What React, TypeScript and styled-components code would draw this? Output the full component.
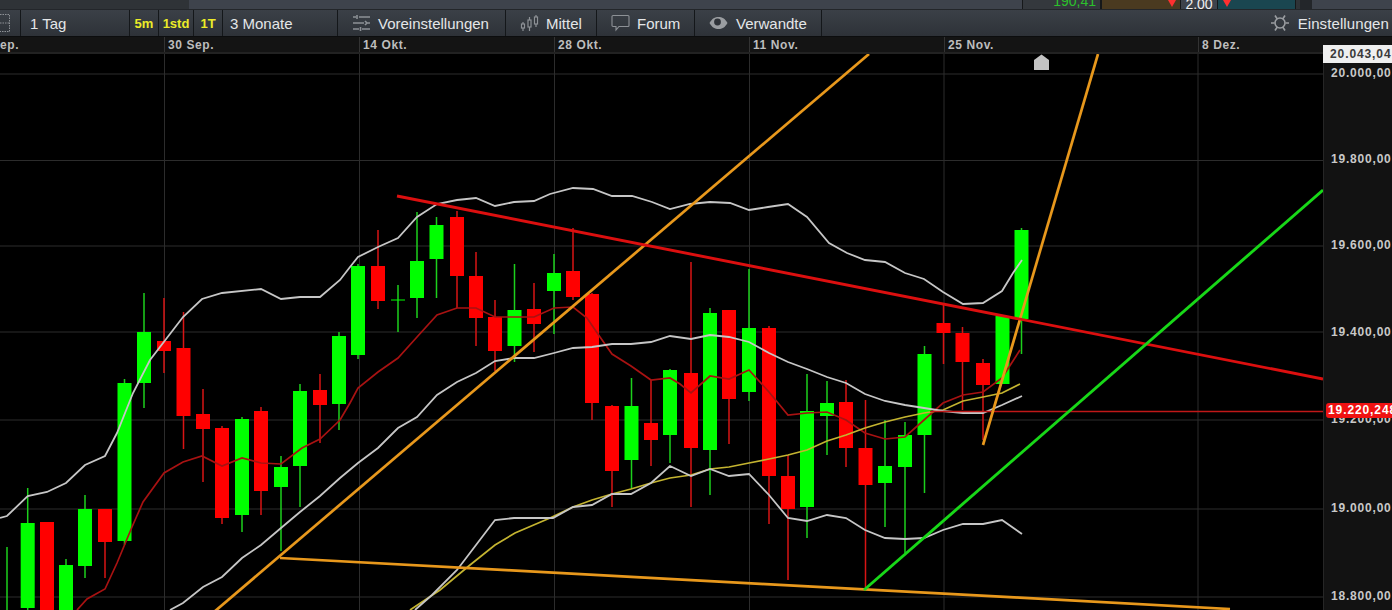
import React from 'react';
import styled, { createGlobalStyle } from 'styled-components';

type Candle = [number, number, number, number, number, 0 | 1];

// x, high, body top, body bottom, low, up
const candles: Candle[] = [
  [7, 547, 612, 620, 620, 1], [27.7, 488, 523, 608, 612, 1], [47, 522, 522, 620, 620, 0], [66, 559, 565, 620, 620, 1],
  [85, 495, 509, 566, 578, 1], [105, 509, 509, 542, 578, 0], [124.5, 379, 383, 541, 545, 1], [144, 293, 332, 383, 408, 1],
  [164, 298, 341, 351, 373, 0], [183.5, 312, 348, 416, 449, 0], [203, 389, 414, 429, 482, 0], [222, 426, 428, 518, 524, 0],
  [242, 417, 419, 515, 532, 1], [261, 407, 411, 491, 515, 0], [281, 456, 467, 487, 551, 1], [300, 384, 391, 466, 507, 1],
  [320, 374, 390, 405, 443, 0], [339, 332, 336, 404, 430, 1], [358, 264, 266, 355, 359, 1], [378, 230, 266, 301, 309, 0],
  [398, 285, 299.5, 300.5, 332, 1], [417, 212, 261, 298, 318, 1], [436.5, 217, 225, 259, 298, 1], [457, 211, 217, 276, 308, 0],
  [476, 252, 276, 318, 346, 0], [495, 300, 317, 351, 371, 0], [514.5, 264, 310, 346, 362, 1], [534, 283, 309, 324, 352, 0],
  [554, 254, 273, 291, 334, 1], [573, 228, 271, 297, 300, 0], [592, 293, 294, 403, 420, 0], [612, 405, 406, 471, 507, 0],
  [631.5, 378, 406, 460, 489, 1], [651, 380, 423, 440, 466, 0], [670, 369, 370, 435, 463, 1], [691, 262, 373, 448, 507, 0],
  [710, 308, 313, 450, 495, 1], [729, 310, 310, 399, 444, 0], [749, 269, 328, 392, 401, 1], [769, 326, 328, 476, 524, 0],
  [788, 455, 476, 509, 580, 0], [807, 374, 411, 507, 538, 1], [827, 381, 403, 416, 455, 1], [846, 380, 402, 448, 467, 0],
  [865.5, 400, 448, 485, 590, 0], [885, 420, 466, 483, 527, 1], [905, 422, 435, 467, 553, 1], [924.5, 346, 354, 435, 493, 1],
  [943.5, 303, 323, 333, 364, 0], [962.5, 327, 333, 362, 410, 0], [983, 359, 363, 385, 440, 0], [1002.5, 315, 316, 384, 384, 1],
  [1021.5, 228, 230, 319, 354, 1],
];

const upperBand = '0,518 7,516 27.7,496 47,492 66,483 85,465 105,456 117,433 133,393 150,360 183,317 202,299 222,293 261,289 281,299 300,297 320,297 340,280 350,267 358,257 378,247 398,238 417,217 437,204 457,200 476,198 495,206 514,202 534,201 550,194 573,188 593,189 612,196 632,196 652,202 670,209 690,204 710,202 730,203 749,210 768,207 788,204 807,217 829,243 847,253 865,260 885,262 905,273 924,279 943,292 963,304 983,303 1002,291 1013,273 1022,260';
const middleBand = '170,610 183,603 203,587 222,577 242,558 261,545 281,528 300,512 320,496 340,478 358,463 378,448 398,428 417,417 437,395 457,382 476,373 495,361 514,358 534,358 554,353 573,348 592,347 612,344 631,344 651,342 670,336 691,339 710,335 729,337 749,342 769,353 788,362 807,369 827,377 846,383 865,394 885,401 905,405 924,408 943,411 963,413 983,413 1002,405 1022,396';
const lowerBand = '415,610 432,595 457,570 476,545 495,520 514,518 553,518 573,507 592,505 612,494 631,494 651,483 670,466 691,476 710,469 729,476 749,474 769,495 788,518 807,521 827,515 846,518 865,530 885,538 905,539 924,538 943,530 963,524 983,524 1002,520 1022,534';
const yellowAvg = '410,610 440,590 470,565 495,545 515,533 550,518 573,507 592,500 612,494 631,489 651,483 670,478 691,475 710,469 729,467 749,463 769,459 788,455 807,450 827,441 846,435 865,428 885,422 905,417 924,413 943,410 963,401 983,397 1002,393 1020,384';
const redAvg = '77,610 87,599 105,589 117,563 132,527 143,502 164,473 183,462 202,456 222,466 242,458 261,463 281,464 302,448 320,439 340,420 350,403 358,388 378,372 398,358 417,337 437,315 457,308 476,308 495,317 534,317 554,308 573,307 587,318 600,337 612,354 631,366 651,380 670,378 680,384 691,393 710,376 729,379 749,370 769,392 788,415 807,413 827,412 846,420 865,433 885,439 905,437 924,420 943,403 963,395 983,392 1002,378 1020,350';

const gridY = [74, 160.5, 246, 332, 420, 509, 597];
const gridX = [164.5, 359.5, 554.5, 749.5, 944, 1198];

const dates: [string, number][] = [['ep.', 164], ['30 Sep.', 195], ['14 Okt.', 195], ['28 Okt.', 195], ['11 Nov.', 195], ['25 Nov.', 254], ['8 Dez.', 194]];
const prices: [string, number][] = [['20.000,00', 86], ['19.800,00', 86], ['19.600,00', 87], ['19.400,00', 87], ['19.200,00', 89], ['19.000,00', 88], ['18.800,00', 20]];

const GlobalStyle = createGlobalStyle`
  html, body {
    margin: 0;
    background: #000;
    overflow: hidden;
  }
`;

const Page = styled.div`
  position: relative;
  width: 1392px;
  height: 610px;
  display: flex;
  flex-direction: column;
  overflow: hidden;
  background: #000;
  font-family: 'Liberation Sans', Arial, sans-serif;
`;

const TopStrip = styled.div`
  height: 9px;
  display: flex;
  overflow: hidden;
  background: #3e434c;
`;

const StripPart = styled.div<{ $w: number; $bg: string; $border?: boolean; $end?: boolean }>`
  position: relative;
  width: ${p => p.$w}px;
  flex: none;
  box-sizing: border-box;
  padding-right: ${p => (p.$end ? 4 : 0)}px;
  background: ${p => p.$bg};
  border-right: ${p => (p.$border ? '1px solid #16181a' : 'none')};
  border-left: ${p => (p.$border ? '1px solid #16181a' : 'none')};
  display: flex;
  justify-content: ${p => (p.$end ? 'flex-end' : 'center')};
`;

const StripValue = styled.span<{ $color: string; $shift: number }>`
  font-size: 14px;
  line-height: 14px;
  margin-top: ${p => p.$shift}px;
  color: ${p => p.$color};
`;

const DownMark = styled.i<{ $left: number }>`
  position: absolute;
  top: 0;
  left: ${p => p.$left}px;
  border-left: 4px solid transparent;
  border-right: 4px solid transparent;
  border-top: 7px solid #ff3030;
`;

const Toolbar = styled.div`
  height: 28px;
  flex: none;
  display: flex;
  align-items: stretch;
  box-sizing: border-box;
  border-top: 1px solid #23262a;
  border-bottom: 1px solid #0c0d0e;
  background: linear-gradient(#3b4047, #2e3238);
  color: #e4e6e8;
  font-size: 15px;
`;

const ToolButton = styled.div<{ $w: number; $gap?: number; $pad?: number }>`
  width: ${p => p.$w}px;
  flex: none;
  box-sizing: border-box;
  display: flex;
  align-items: center;
  gap: ${p => p.$gap ?? 8}px;
  padding-left: ${p => p.$pad ?? 9}px;
  border-right: 1px solid #14171a;
  overflow: hidden;
  white-space: nowrap;
`;

const RangeButton = styled(ToolButton)`
  justify-content: center;
  padding-left: 0;
  color: #ecec28;
  font-weight: bold;
  font-size: 13px;
`;

const ToolSpacer = styled.div`
  flex: 1;
`;

const SettingsButton = styled.div`
  display: flex;
  align-items: center;
  gap: 9px;
  padding-right: 3px;
  letter-spacing: 0.1px;
`;

const DateAxis = styled.div`
  height: 17px;
  flex: none;
  display: flex;
  box-sizing: border-box;
  background: #141414;
  border-bottom: 2px solid #222;
`;

const DateCell = styled.div<{ $w: number; $first?: boolean }>`
  width: ${p => p.$w}px;
  flex: none;
  box-sizing: border-box;
  padding-left: ${p => (p.$first ? 0 : 3)}px;
  border-left: ${p => (p.$first ? 'none' : '1px solid #333')};
  color: #bdbdbd;
  font-size: 12px;
  font-weight: bold;
  letter-spacing: 0.6px;
  line-height: 17px;
`;

const ChartRow = styled.div`
  flex: 1;
  display: flex;
  min-height: 0;
`;

const ChartCanvas = styled.svg`
  width: 1323px;
  height: 556px;
  flex: none;
  display: block;
  background: #000;
  filter: blur(0.3px);
`;

const PriceAxis = styled.div`
  position: relative;
  flex: 1;
  display: flex;
  flex-direction: column;
  box-sizing: border-box;
  padding: 12px 0 0 7px;
  background: #121212;
  border-left: 1px solid #262626;
  overflow: hidden;
`;

const PriceLabel = styled.div<{ $h: number }>`
  height: ${p => p.$h}px;
  flex: none;
  color: #c8c8c8;
  font-size: 12px;
  font-weight: bold;
  letter-spacing: 0.8px;
  line-height: 15px;
  white-space: nowrap;
`;

const PriceBadge = styled.div<{ $top: number; $bg: string; $color: string; $pad: number }>`
  position: absolute;
  top: ${p => p.$top}px;
  right: 0;
  box-sizing: border-box;
  width: ${p => 69 - (p.$pad < 4 ? 3 : 0)}px;
  height: ${p => (p.$pad < 4 ? 15 : 18)}px;
  padding-left: ${p => p.$pad}px;
  background: ${p => p.$bg};
  border-radius: ${p => (p.$pad < 4 ? '3px 0 0 3px' : '0')};
  color: ${p => p.$color};
  font-size: 12px;
  font-weight: bold;
  letter-spacing: 0.9px;
  line-height: ${p => (p.$pad < 4 ? 15 : 18)}px;
  white-space: nowrap;
  overflow: hidden;
`;

const PresetsIcon = () => (
  <svg width="19" height="18" viewBox="0 0 19 18" fill="none" stroke="#8d9196" strokeWidth="1.6">
    <path d="M1 3h3M7 3h11M5 1v4M1 9h11M15 9h3M13 7l2 2-2 2M1 15h6M10 15h8M8.500 13v4" />
  </svg>
);

const CandleIcon = () => (
  <svg width="19" height="18" viewBox="0 0 19 18" fill="none" stroke="#8d9196" strokeWidth="1.2">
    <path d="M3 8v9M9.500 3v14M16 1v12" />
    <rect x="1.500" y="10" width="3" height="4" fill="#2f3339" />
    <rect x="8" y="6" width="3" height="7" fill="#2f3339" />
    <rect x="14.500" y="3" width="3" height="7" fill="#2f3339" />
  </svg>
);

const ForumIcon = () => (
  <svg width="19" height="18" viewBox="0 0 19 18" fill="none" stroke="#8d9196" strokeWidth="1.1">
    <path d="M2 1.500h15a1 1 0 0 1 1 1v9a1 1 0 0 1-1 1H8l-3 3.500v-3.500H2a1 1 0 0 1-1-1v-9a1 1 0 0 1 1-1z" />
  </svg>
);

const EyeIcon = () => (
  <svg width="19" height="14" viewBox="0 0 19 14">
    <path d="M0.500 7C3 2.500 6 1 9.500 1S16 2.500 18.500 7C16 11.500 13 13 9.500 13S3 11.500 0.500 7z" fill="#9a9da1" />
    <circle cx="8.500" cy="6" r="3.400" fill="#2f3339" />
  </svg>
);

const GearIcon = () => (
  <svg width="18" height="18" viewBox="0 0 18 18" fill="none" stroke="#9a9da1" strokeWidth="1.6">
    <circle cx="9" cy="9" r="5" />
    <path d="M0 9h3.500M14.500 9H18M4 1.500l2.300 3.500M14 1.500l-2.300 3.500M4 16.500l2.300-3.500M14 16.500l-2.300-3.500" />
  </svg>
);

const LayoutIcon = () => (
  <svg width="11" height="20" viewBox="0 0 11 20" fill="none" stroke="#8d9196" strokeWidth="1" strokeDasharray="1.500 1">
    <path d="M0 1.500h9.500v17H0M0 10h9.500" />
  </svg>
);

const App: React.FC = () => {
  return (
    <Page>
      <GlobalStyle />
      <TopStrip>
        <StripPart $w={189} $bg="#2f3337" />
        <StripPart $w={833} $bg="#3e434c" />
        <StripPart $w={79} $bg="#34383d" $border $end>
          <StripValue $color="#2cc02c" $shift={-6}>190,41</StripValue>
        </StripPart>
        <StripPart $w={80} $bg="#4a3a20" $border>
          <DownMark $left={66} />
        </StripPart>
        <StripPart $w={36} $bg="#3e434c">
          <StripValue $color="#f0f0f0" $shift={-3}>2,00</StripValue>
        </StripPart>
        <StripPart $w={79} $bg="#1a4650" $border>
          <DownMark $left={5} />
        </StripPart>
        <StripPart $w={4} $bg="#2f3337" />
        <StripPart $w={12} $bg="#23262a" />
        <StripPart $w={80} $bg="#3e434c" />
      </TopStrip>

      <Toolbar>
        <ToolButton $w={21} $pad={0}><LayoutIcon /></ToolButton>
        <ToolButton $w={109}>1 Tag</ToolButton>
        <RangeButton $w={29}>5m</RangeButton>
        <RangeButton $w={35}>1std</RangeButton>
        <RangeButton $w={29}>1T</RangeButton>
        <ToolButton $w={115} $pad={7}>3 Monate</ToolButton>
        <ToolButton $w={168} $pad={14} $gap={7}><PresetsIcon />Voreinstellungen</ToolButton>
        <ToolButton $w={91} $pad={14} $gap={7}><CandleIcon />Mittel</ToolButton>
        <ToolButton $w={98} $pad={14} $gap={7}><ForumIcon />Forum</ToolButton>
        <ToolButton $w={127} $pad={14} $gap={8}><EyeIcon />Verwandte</ToolButton>
        <ToolSpacer />
        <SettingsButton><GearIcon />Einstellungen</SettingsButton>
      </Toolbar>

      <DateAxis>
        {dates.map(([label, w], i) => (
          <DateCell key={label} $w={w} $first={i === 0}>{label}</DateCell>
        ))}
      </DateAxis>

      <ChartRow>
        <ChartCanvas viewBox="0 54 1323 556">
          {gridY.map(y => <line key={y} x1="0" x2="1323" y1={y} y2={y} stroke="#2c2c2c" strokeWidth="1" />)}
          {gridX.map(x => <line key={x} x1={x} x2={x} y1="54" y2="610" stroke="#2c2c2c" strokeWidth="1" />)}

          {candles.map(([x, high, top, bottom, low, up]) => (
            <g key={x}>
              <line x1={x} x2={x} y1={high} y2={low} stroke={up ? '#1cd01c' : '#d81414'} strokeWidth="1.500" />
              <rect x={x - 7} y={top} width="14" height={bottom - top} fill={up ? '#00ff00' : '#ff0000'} />
            </g>
          ))}

          <polyline points={redAvg} fill="none" stroke="#a81212" strokeWidth="1.700" />
          <polyline points={yellowAvg} fill="none" stroke="#c4b430" strokeWidth="1.700" />
          <polyline points={upperBand} fill="none" stroke="#c6c6c6" strokeWidth="1.800" />
          <polyline points={middleBand} fill="none" stroke="#c6c6c6" strokeWidth="1.800" />
          <polyline points={lowerBand} fill="none" stroke="#c6c6c6" strokeWidth="1.800" />

          <line x1="930" x2="1323" y1="411.500" y2="411.500" stroke="#c01818" strokeWidth="1.500" />
          <line x1="214" y1="612" x2="869" y2="54" stroke="#e8981c" strokeWidth="2.700" />
          <line x1="280" y1="558" x2="1230" y2="609" stroke="#e8981c" strokeWidth="2.700" />
          <line x1="983" y1="445" x2="1098" y2="54" stroke="#e8981c" strokeWidth="2.700" />
          <line x1="397" y1="196" x2="1323" y2="379" stroke="#dc0f0f" strokeWidth="2.900" />
          <line x1="864" y1="590" x2="1323" y2="190" stroke="#18d818" strokeWidth="2.900" />
          <path d="M1034 70V60l7.500-5.500 7.500 5.500v10z" fill="#c4c4c4" />
        </ChartCanvas>

        <PriceAxis>
          {prices.map(([label, h]) => <PriceLabel key={label} $h={h}>{label}</PriceLabel>)}
          <PriceBadge $top={349} $bg="#f01212" $color="#fff" $pad={2}>19.220,248</PriceBadge>
        </PriceAxis>
      </ChartRow>

      <PriceBadge $top={45} $bg="#efefef" $color="#3a3a3a" $pad={7}>20.043,04</PriceBadge>
    </Page>
  );
};

export default App;
